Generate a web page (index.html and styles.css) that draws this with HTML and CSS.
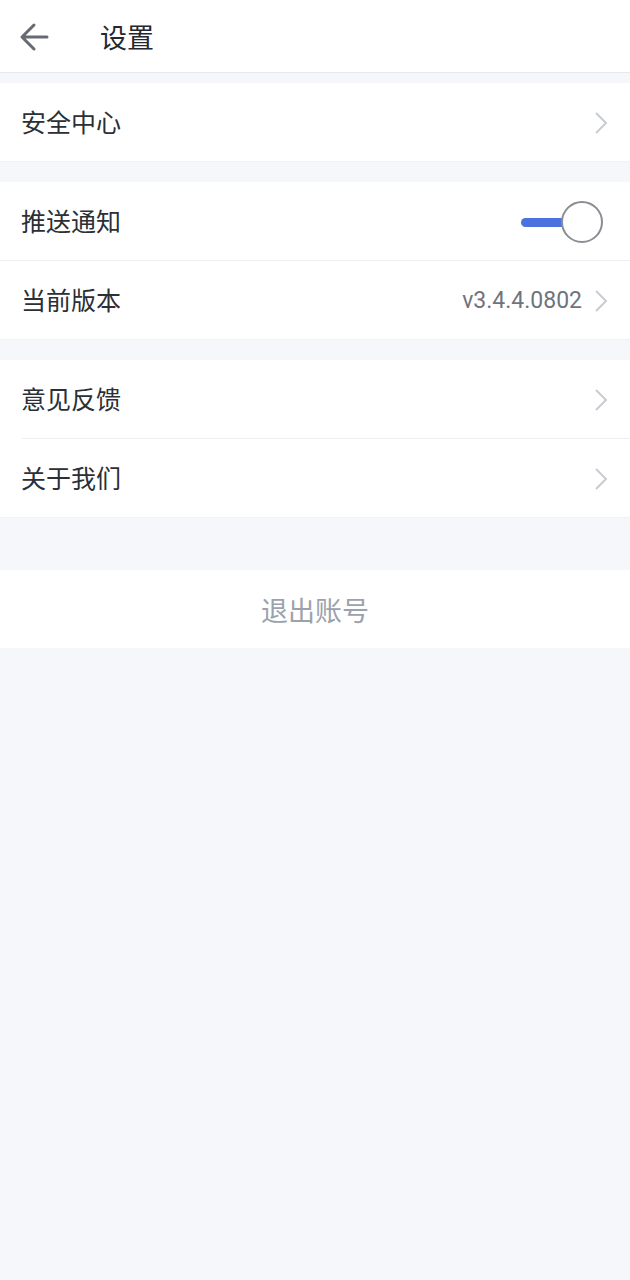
FILE: index.html
```html
<!DOCTYPE html>
<html lang="zh">
<head>
<meta charset="utf-8">
<link rel="stylesheet" href="styles.css">
</head>
<body>
<div class="page">
  <header class="header">
    <svg class="back" width="30" height="30" viewBox="0 0 30 30"><path d="M28 15H3M15 3L3 15L15 27" fill="none" stroke="#666a73" stroke-width="3" stroke-linecap="round" stroke-linejoin="round"/></svg>
    <h1 class="title">设置</h1>
  </header>

  <section class="group">
    <div class="row">
      <span class="label">安全中心</span>
      <svg class="chev" width="14" height="22" viewBox="0 0 14 22"><path d="M2 1L12 11L2 21" fill="none" stroke="#c8cbd0" stroke-width="2"/></svg>
    </div>
  </section>

  <section class="group">
    <div class="row row-line-full">
      <span class="label">推送通知</span>
      <div class="toggle"><span class="track"></span><span class="knob"></span></div>
    </div>
    <div class="row">
      <span class="label">当前版本</span>
      <span class="value">v3.4.4.0802</span>
      <svg class="chev" width="14" height="22" viewBox="0 0 14 22"><path d="M2 1L12 11L2 21" fill="none" stroke="#c8cbd0" stroke-width="2"/></svg>
    </div>
  </section>

  <section class="group">
    <div class="row row-line">
      <span class="label">意见反馈</span>
      <svg class="chev" width="14" height="22" viewBox="0 0 14 22"><path d="M2 1L12 11L2 21" fill="none" stroke="#c8cbd0" stroke-width="2"/></svg>
    </div>
    <div class="row">
      <span class="label">关于我们</span>
      <svg class="chev" width="14" height="22" viewBox="0 0 14 22"><path d="M2 1L12 11L2 21" fill="none" stroke="#c8cbd0" stroke-width="2"/></svg>
    </div>
  </section>

  <section class="group logout-group">
    <div class="logout">退出账号</div>
  </section>
</div>
</body>
</html>
```

FILE: styles.css
```css
* { box-sizing: border-box; }
html, body { margin: 0; padding: 0; }
body {
  background: #f5f7fa;
  font-family: "Noto Sans CJK SC", "Noto Sans", sans-serif;
  color: #2b2f36;
}
.page { width: 630px; min-height: 1280px; background: #f5f7fa; }
.header {
  height: 73px;
  background: #fff;
  border-bottom: 1px solid #e6e9ee;
  display: flex;
  align-items: center;
  padding-left: 19px;
}
.back { display: block; margin-top: 2px; }
.title {
  margin: 0 0 0 51px;
  font-size: 27px;
  font-weight: 400;
  color: #24282e;
  line-height: 1;
}
.group { background: #fff; margin-top: 10px; }
.group + .group { margin-top: 20px; }
.logout-group { margin-top: 52px !important; }
.row {
  height: 79px;
  display: flex;
  align-items: center;
  padding: 0 22px 0 21px;
  position: relative;
}
.group > .row:last-child::after {
  content: "";
  position: absolute;
  left: 0; right: 0; bottom: 0;
  height: 1px;
  background: #f0f2f5;
}
.row-line-full::after {
  content: "";
  position: absolute;
  left: 0; right: 0; bottom: 0;
  height: 1px;
  background: #eceef2;
}
.row-line::after {
  content: "";
  position: absolute;
  left: 22px; right: 0; bottom: 0;
  height: 1px;
  background: #eceef2;
}
.label { font-size: 25px; flex: 1; line-height: 1; margin-top: -2px; }
.value {
  font-family: Roboto, "Noto Sans", sans-serif;
  font-size: 23px;
  color: #6f747c;
  margin-right: 12px;
  margin-top: 0;
}
.chev { display: block; margin-top: 0; }
.toggle {
  width: 84px;
  height: 42px;
  position: relative;
  margin-right: 3px;
}
.track {
  position: absolute;
  left: 0; top: 17px;
  width: 50px; height: 9px;
  border-radius: 5px;
  background: #4c72e0;
}
.knob {
  position: absolute;
  right: 2px; top: 0;
  width: 42px; height: 42px;
  border-radius: 50%;
  background: #fff;
  border: 2px solid #8a8d92;
}
.logout {
  height: 78px;
  display: flex;
  align-items: center;
  justify-content: center;
  font-size: 27px;
  color: #9ca2ad;
  padding-top: 0;
}
```
